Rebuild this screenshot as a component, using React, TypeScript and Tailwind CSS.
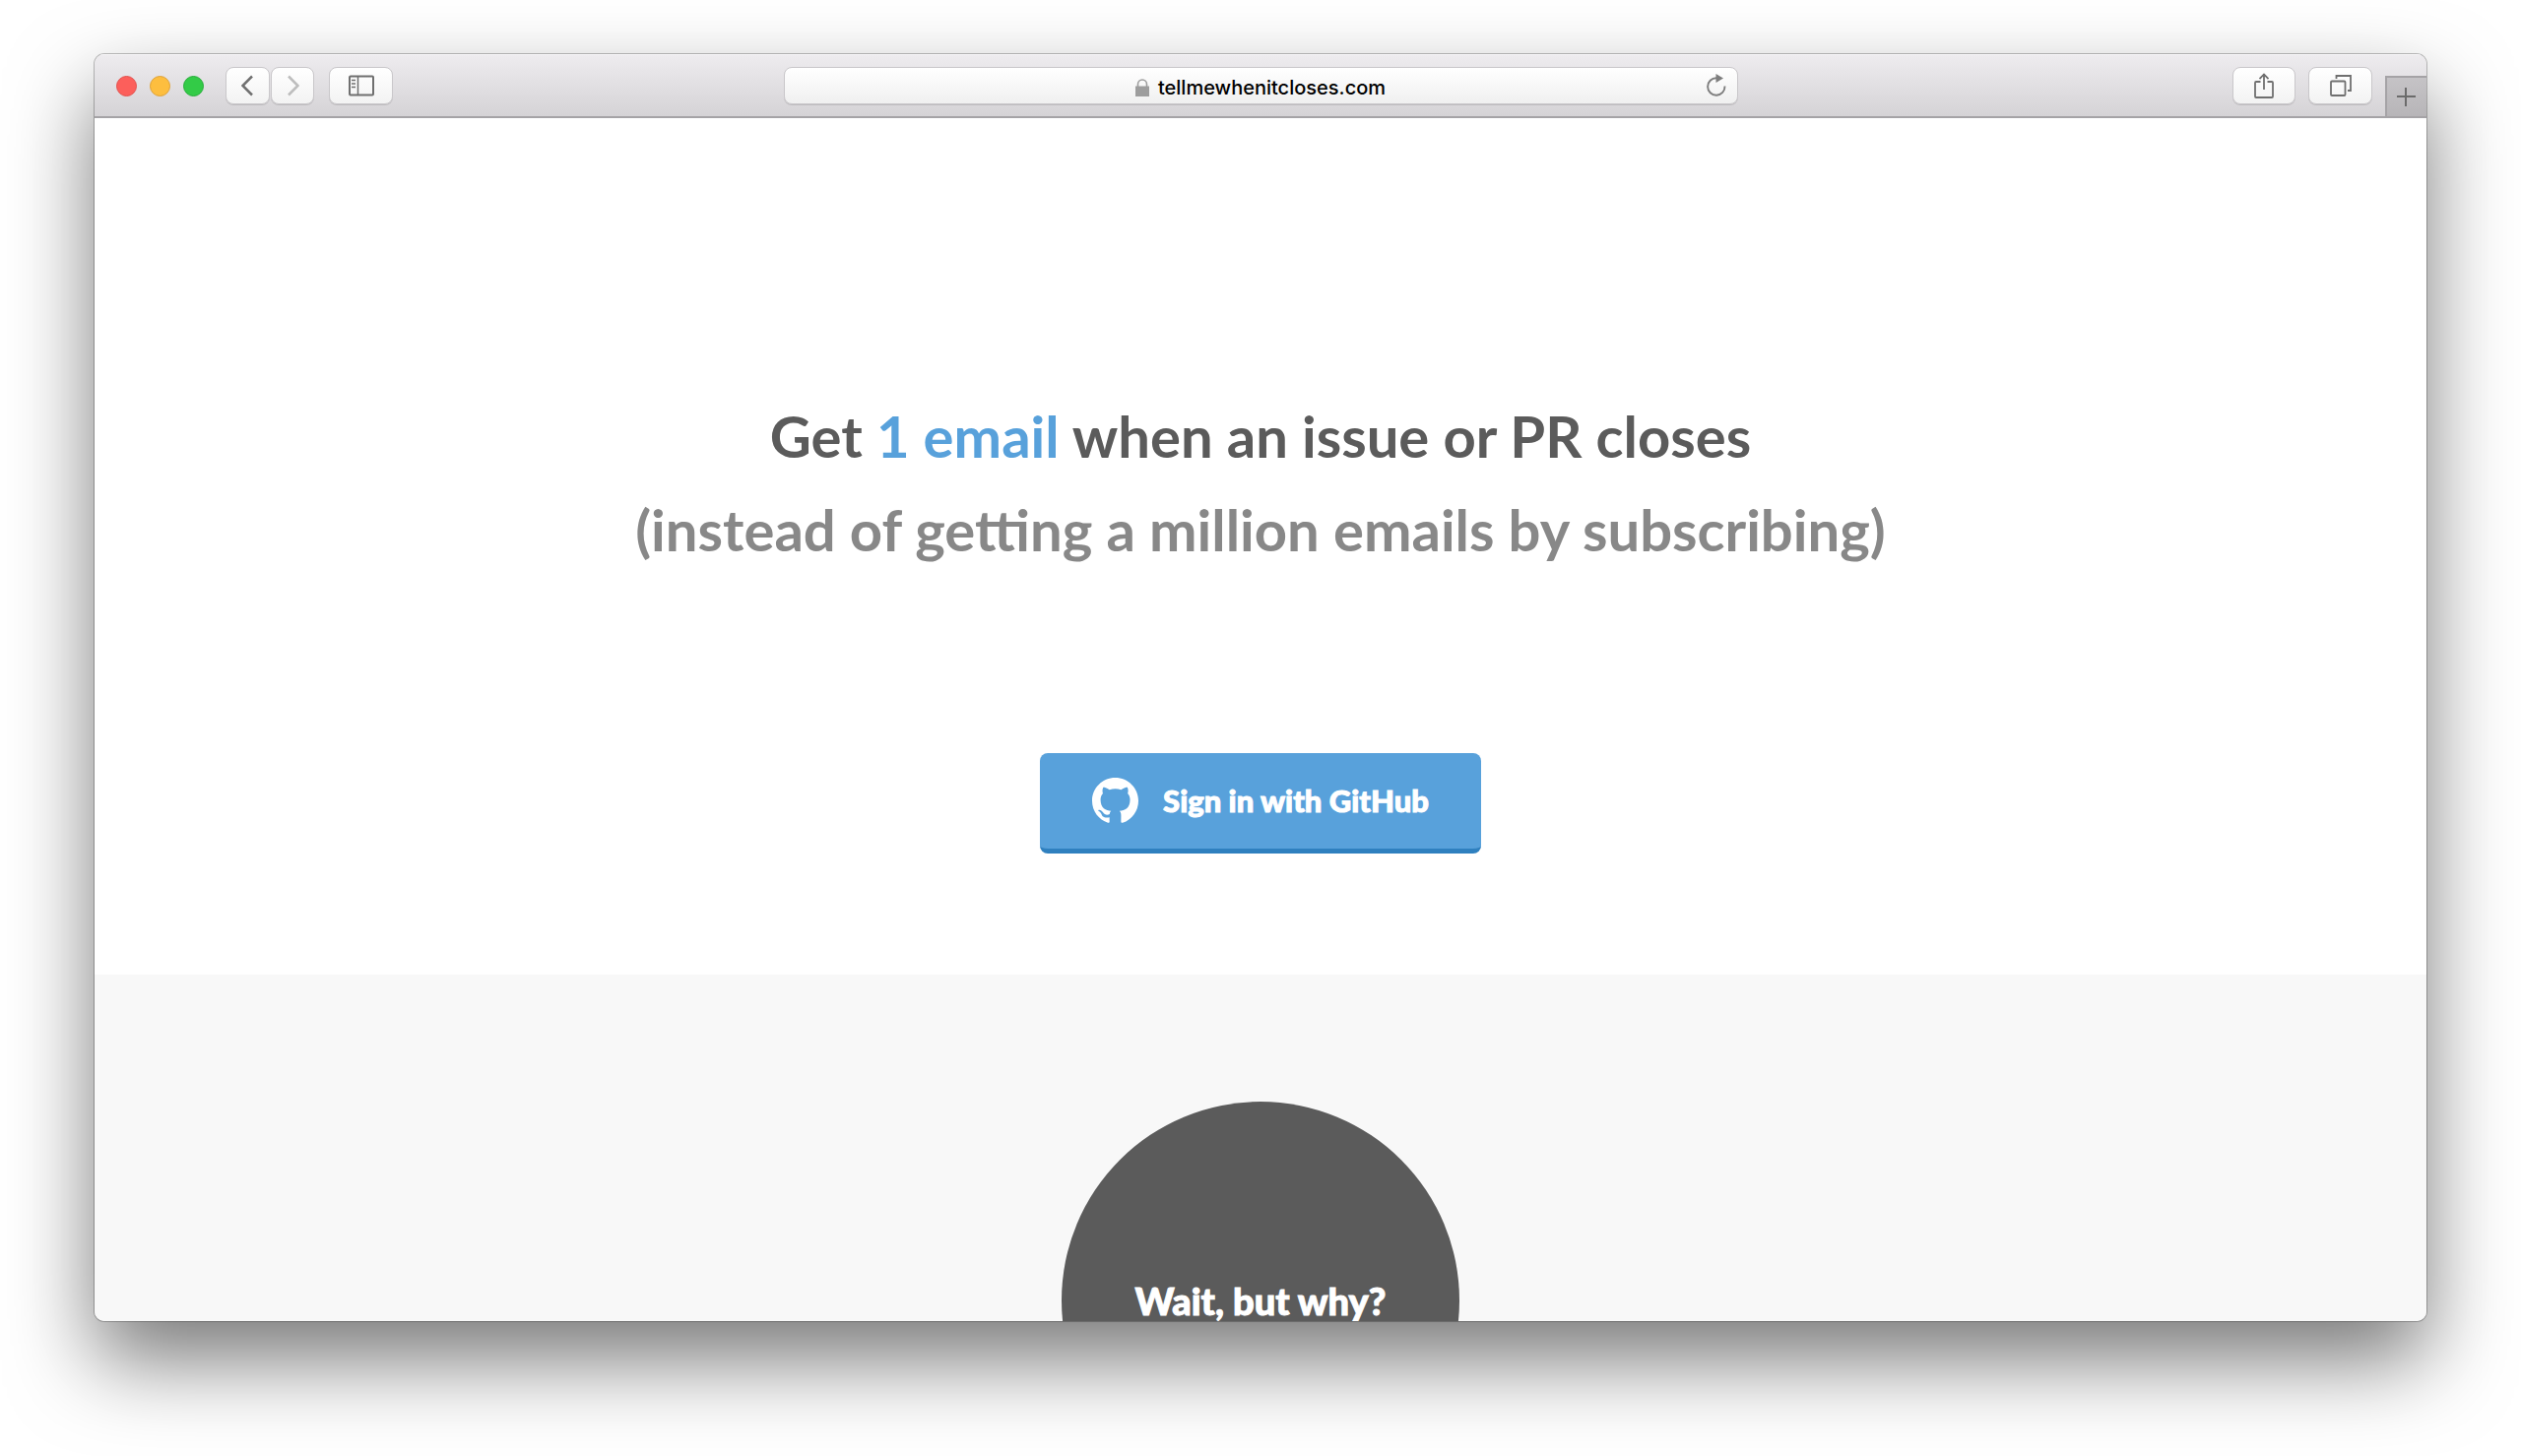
import type { ReactNode } from 'react';

const toolButton =
  'flex h-[38px] items-center justify-center border border-[#c9c7ca] bg-linear-to-b from-white to-[#f3f3f3] text-[#6f6f6f] shadow-[0_1px_0_#bebcbf]';

function ToolButton({ label, className, children }: { label: string; className: string; children: ReactNode }) {
  return (
    <button type="button" aria-label={label} className={`${toolButton} ${className}`}>
      {children}
    </button>
  );
}

function Toolbar() {
  return (
    <header className="grid h-[65px] shrink-0 grid-cols-[1fr_969px_1fr] border-b-2 border-[#a5a3a6] bg-linear-to-b from-[#eeecef] to-[#d5d3d6] pt-px shadow-[inset_0_1px_0_#f8f7f9]">
      <div className="flex items-center pl-[22px]">
        <div className="flex gap-[13px]">
          <button type="button" aria-label="Close" className="size-[21px] rounded-full border border-[#e2504c] bg-[#fc5f5b]" />
          <button type="button" aria-label="Minimize" className="size-[21px] rounded-full border border-[#dfa136] bg-[#fdbe3f]" />
          <button type="button" aria-label="Zoom" className="size-[21px] rounded-full border border-[#25ad38] bg-[#33cb47]" />
        </div>
        <nav className="ml-[22px] flex gap-px">
          <ToolButton label="Back" className="w-[45px] rounded-lg">
            <svg width="14" height="22" viewBox="0 0 14 22" fill="none" stroke="currentColor" strokeWidth="2.5">
              <path d="M11 1.5 1.5 11l9.5 9.5" />
            </svg>
          </ToolButton>
          <ToolButton label="Forward" className="w-[44px] rounded-lg">
            <svg width="14" height="22" viewBox="0 0 14 22" fill="none" stroke="#bdbdbd" strokeWidth="2.5">
              <path d="M3 1.5 12.5 11 3 20.5" />
            </svg>
          </ToolButton>
        </nav>
        <ToolButton label="Show sidebar" className="ml-[15px] w-[65px] rounded-lg">
          <svg width="26" height="22" viewBox="0 0 26 22" fill="none" stroke="currentColor" strokeWidth="2">
            <rect x="1" y="1.5" width="24" height="19" rx="1" />
            <path d="M9.5 1.5v19" strokeWidth="1.5" />
            <path d="M3 5.5h4M3 9h4M3 12.5h4" strokeWidth="1.3" />
          </svg>
        </ToolButton>
      </div>

      <div className="flex h-[38px] items-center self-center rounded-lg border border-[#c9c7ca] bg-linear-to-b from-white to-[#f0f0f0] pr-[10px] pl-[32px] shadow-[0_1px_0_#bebcbf]">
        <div className="flex flex-1 items-center justify-center gap-[9px] pt-[3px]">
          <svg width="14" height="18" viewBox="0 0 14 18" fill="none">
            <path d="M0 7.5h14V18H0z" fill="#9d9d9d" />
            <path d="M2.5 8V5.5a4.5 4.5 0 0 1 9 0V8" stroke="#9d9d9d" strokeWidth="1.6" />
          </svg>
          <span className="font-[Inter,sans-serif] text-[20px] leading-7 font-medium text-black">tellmewhenitcloses.com</span>
        </div>
        <button type="button" aria-label="Reload" className="text-[#7d7d7d]">
          <svg width="22" height="24" viewBox="0 0 22 24" fill="none">
            <path d="M19.5 12.5A8.7 8.7 0 1 1 11 4.3" stroke="currentColor" strokeWidth="1.9" />
            <path d="M10.5 0v9l7.5-4.5z" fill="currentColor" />
          </svg>
        </button>
      </div>

      <div className="flex items-center justify-end">
        <ToolButton label="Share" className="w-16 rounded-lg">
          <svg width="20" height="26" viewBox="0 0 20 26" fill="none" stroke="currentColor" strokeWidth="1.8">
            <path d="M6.5 9H2a1 1 0 0 0-1 1v14a1 1 0 0 0 1 1h16a1 1 0 0 0 1-1V10a1 1 0 0 0-1-1h-4.5" />
            <path d="M10 17V1.5M5.5 6.2 10 1.5l4.5 4.7" />
          </svg>
        </ToolButton>
        <ToolButton label="Show all tabs" className="ml-[13px] w-[65px] rounded-lg">
          <svg width="22" height="22" viewBox="0 0 22 22" fill="none" stroke="currentColor" strokeWidth="1.8">
            <rect x="1" y="6.5" width="14.5" height="14.5" rx="1" />
            <path d="M6.5 4V1H21v15h-3" />
          </svg>
        </ToolButton>
        <button
          type="button"
          aria-label="New tab"
          className="ml-[13px] flex h-[41px] w-[42px] items-center justify-center self-end border-t-2 border-l-2 border-[#a5a3a6] bg-linear-to-b from-[#c5c3c6] to-[#b7b5b8] text-[#6b6b6b]"
        >
          <svg width="20" height="20" viewBox="0 0 20 20" stroke="currentColor" strokeWidth="2">
            <path d="M9 0v19M0 9h19" />
          </svg>
        </button>
      </div>
    </header>
  );
}

function GitHubMark() {
  return (
    <svg width="47" height="47" viewBox="0 0 16 16" fill="currentColor" aria-hidden="true">
      <path d="M8 0C3.58 0 0 3.58 0 8c0 3.54 2.29 6.53 5.47 7.59.4.07.55-.17.55-.38 0-.19-.01-.82-.01-1.49-2.01.37-2.53-.49-2.69-.94-.09-.23-.48-.94-.82-1.13-.28-.15-.68-.52-.01-.53.63-.01 1.08.58 1.23.82.72 1.21 1.87.87 2.33.66.07-.52.28-.87.51-1.07-1.78-.2-3.64-.89-3.64-3.95 0-.87.31-1.59.82-2.15-.08-.2-.36-1.02.08-2.12 0 0 .67-.21 2.2.82.64-.18 1.32-.27 2-.27s1.36.09 2 .27c1.53-1.04 2.2-.82 2.2-.82.44 1.1.16 1.92.08 2.12.51.56.82 1.27.82 2.15 0 3.07-1.87 3.75-3.65 3.95.29.25.54.73.54 1.48 0 1.07-.01 1.93-.01 2.2 0 .21.15.46.55.38A8.01 8.01 0 0 0 16 8c0-4.42-3.58-8-8-8z" />
    </svg>
  );
}

export default function App() {
  return (
    <div className="h-screen bg-white px-24 pt-[55px] pb-[137px] font-[Lato,sans-serif]">
      <div className="flex h-full flex-col overflow-hidden rounded-[10px] shadow-[0_0_0_1px_rgba(0,0,0,0.25),0_40px_85px_rgba(0,0,0,0.53)]">
        <Toolbar />
        <main className="min-h-0 flex-1 overflow-hidden bg-[#f8f8f8]">
          <section className="flex flex-col items-center bg-white pt-[275px] pb-[123px] text-center">
            <h1 className="text-[58px] leading-[95px] font-bold text-[#5b5b5b]">
              Get <span className="text-[#58a1db]">1 email</span> when an issue or PR closes
              <span className="block text-[#888]">(instead of getting a million emails by subscribing)</span>
            </h1>
            <button
              type="button"
              className="mt-[180px] flex h-[102px] items-center gap-[25px] rounded-lg border-b-[5px] border-[#2f80bf] bg-[#58a1db] px-[53px] font-['Lato_Black',Lato,sans-serif] text-[31px] font-black text-white [-webkit-text-stroke:1px_white]"
            >
              <GitHubMark />
              Sign in with GitHub
            </button>
          </section>
          <section className="flex justify-center pt-[129px]">
            <h2 className="flex size-[404px] items-center justify-center rounded-full bg-[#5b5b5b] font-['Lato_Black',Lato,sans-serif] text-[38px] leading-[48px] font-black text-white [-webkit-text-stroke:1px_white]">
              Wait, but why?
            </h2>
          </section>
        </main>
      </div>
    </div>
  );
}
